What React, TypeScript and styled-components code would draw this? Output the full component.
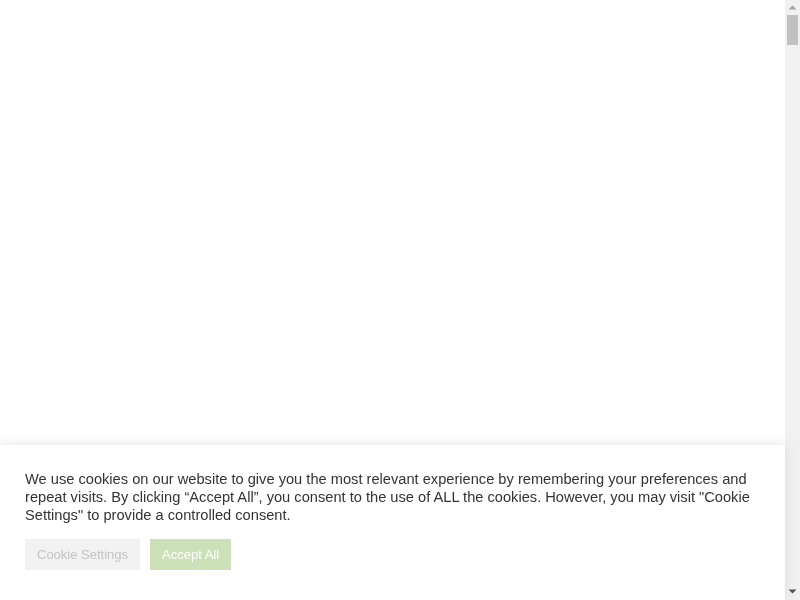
import React from "react";
import styled, { createGlobalStyle } from "styled-components";

const Global = createGlobalStyle`
  html, body { margin: 0; padding: 0; background: #fff; overflow: hidden; }
  body { font-family: "Liberation Sans", Arial, sans-serif; }
`;

const Viewport = styled.div`
  display: flex;
  height: 100vh;
  background: #fff;
`;

const Page = styled.main`
  flex: 1;
  background: #fff;
`;

const Scrollbar = styled.div`
  width: 15px;
  display: flex;
  flex-direction: column;
  background: #f1f1f1;
`;

const ArrowButton = styled.div`
  height: 15px;
  display: flex;
  align-items: center;
  justify-content: center;
  svg { display: block; }
`;

const Track = styled.div`
  flex: 1;
  padding: 0 2px;
`;

const Thumb = styled.div`
  height: 30px;
  background: #c1c1c1;
`;

const Bar = styled.div`
  position: fixed;
  left: 0;
  right: 15px;
  bottom: 0;
  box-sizing: border-box;
  padding: 25px 25px 30px;
  background: #fff;
  color: #333;
  box-shadow: 0 -1px 10px 0 rgba(172, 171, 171, 0.3);
  font-family: "Liberation Sans", Arial, sans-serif;
`;

const Message = styled.p`
  margin: 0 0 15px;
  font-size: 14.65px;
  line-height: 18px;
`;

const Actions = styled.div`
  display: flex;
  gap: 10px;
`;

const Button = styled.button<{ $primary?: boolean }>`
  border: 0;
  margin: 0;
  padding: 8px 12px;
  font-family: "Liberation Sans", Arial, sans-serif;
  font-size: 13px;
  line-height: 15px;
  cursor: pointer;
  background: ${(p) => (p.$primary ? "#cce1b8" : "#f2f2f2")};
  color: ${(p) => (p.$primary ? "#ffffff" : "#c4c4c4")};
`;

export default function App() {
  return (
    <>
      <Global />
      <Viewport>
        <Page />
        <Scrollbar aria-hidden="true">
          <ArrowButton>
            <svg width="15" height="15" viewBox="0 0 15 15">
              <polygon points="3.5,9.5 11.5,9.5 7.5,5.5" fill="#a3a3a3" />
            </svg>
          </ArrowButton>
          <Track>
            <Thumb />
          </Track>
          <ArrowButton>
            <svg width="15" height="15" viewBox="0 0 15 15">
              <polygon points="3.5,4.5 11.5,4.5 7.5,8.5" fill="#505050" />
            </svg>
          </ArrowButton>
        </Scrollbar>
      </Viewport>
      <Bar>
        <Message>
          We use cookies on our website to give you the most relevant experience by remembering your preferences and
          repeat visits. By clicking “Accept All”, you consent to the use of ALL the cookies. However, you may visit
          "Cookie Settings" to provide a controlled consent.
        </Message>
        <Actions>
          <Button>Cookie Settings</Button>
          <Button $primary>Accept All</Button>
        </Actions>
      </Bar>
    </>
  );
}
